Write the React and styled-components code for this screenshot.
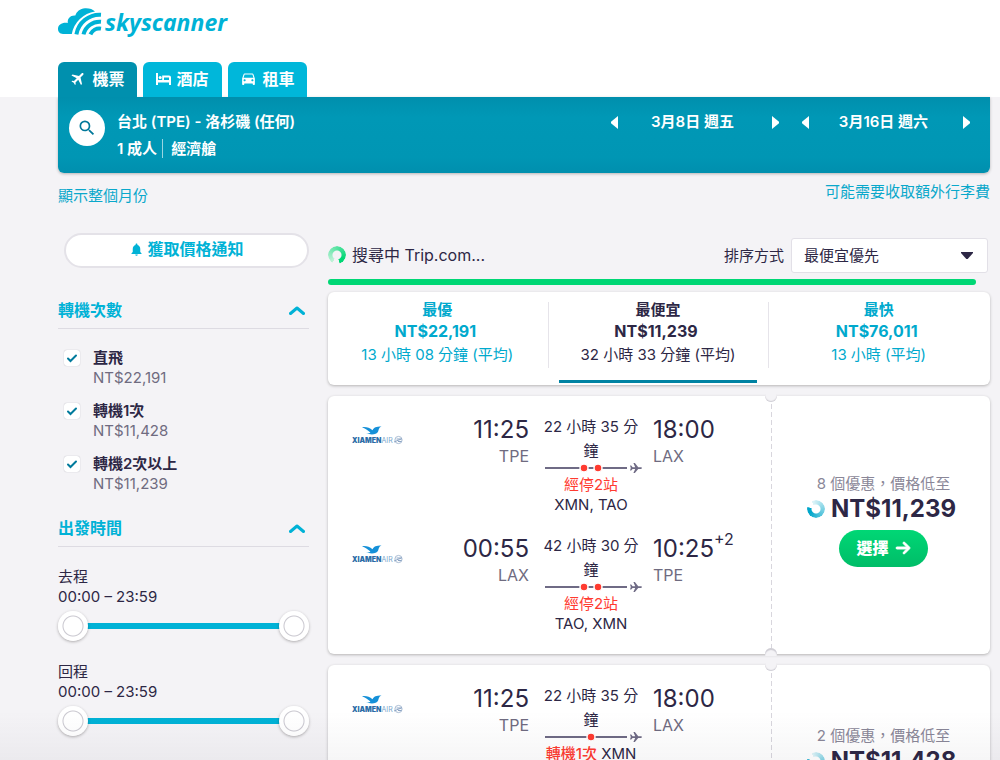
import { useState } from "react";
import styled, { createGlobalStyle } from "styled-components";
import { MdDirectionsCar, MdFlight, MdNotifications, MdSearch } from "react-icons/md";
import { FaArrowRight } from "react-icons/fa6";

const GlobalStyle = createGlobalStyle`
  * {
    box-sizing: border-box;
  }

  body {
    margin: 0;
    background: #f4f3f6;
    color: #2d2745;
    font-family: Inter, "Noto Sans CJK TC", sans-serif;
    font-size: 15px;
    line-height: 20px;
  }

  button,
  select {
    font: inherit;
    color: inherit;
    margin: 0;
    padding: 0;
    border: 0;
    background: none;
    cursor: pointer;
  }

  a {
    color: #0aa8cb;
    text-decoration: none;
  }

  svg {
    display: block;
    flex-shrink: 0;
  }
`;

const Page = styled.div`
  min-height: 100vh;
`;

const Header = styled.header`
  background: #fff;
  padding: 8px 10px 0 58px;
`;

const Logo = styled.a`
  display: flex;
  gap: 3px;
  height: 54px;
  color: #00b2d6;
`;

const LogoText = styled.span`
  font: italic 700 23px/28px "Noto Sans", sans-serif;
`;

const ProductTabs = styled.nav`
  display: flex;
  gap: 6px;
`;

const ProductTab = styled.a`
  display: flex;
  align-items: center;
  justify-content: center;
  gap: 5px;
  width: 79px;
  height: 35px;
  padding-bottom: 2px;
  border-radius: 6px 6px 0 0;
  background: ${(props) => (props.$active ? "#0090ae" : "#00b7da")};
  color: #fff;
  font-size: 16px;
  font-weight: 700;
`;

const SearchPanel = styled.section`
  display: flex;
  justify-content: space-between;
  height: 76px;
  margin: 0 10px 0 58px;
  padding: 11px 20px 0 11px;
  border-radius: 0 0 6px 6px;
  background: linear-gradient(#008fad, #0098b6 20px, #0096b4 60px, #008fae);
  box-shadow: 0 1px 3px rgba(37, 32, 31, 0.3);
  color: #fff;
  font-weight: 600;
`;

const SearchSummary = styled.div`
  display: flex;
  gap: 12px;
`;

const SearchButton = styled.button`
  display: flex;
  align-items: center;
  justify-content: center;
  width: 36px;
  height: 36px;
  margin-top: 2px;
  border-radius: 50%;
  background: #fff;
  color: #00789a;
`;

const Route = styled.div`
  line-height: 27px;
`;

const Cabin = styled.span`
  margin-left: 5px;
  padding-left: 8px;
  border-left: 1px solid rgba(255, 255, 255, 0.6);
`;

const Dates = styled.div`
  display: flex;
  gap: 23px;
`;

const DatePicker = styled.div`
  display: flex;
  align-items: center;
  justify-content: space-between;
  width: 168px;
  height: 28px;
`;

const DateLabel = styled.span`
  padding-right: 5px;
`;

const Links = styled.div`
  display: flex;
  align-items: flex-start;
  justify-content: space-between;
  padding: 9px 10px 0 58px;
`;

const MonthLink = styled.a`
  margin-top: 4px;
`;

const Content = styled.div`
  display: grid;
  grid-template-columns: 251px 1fr;
  gap: 19px;
  padding: 27px 10px 0 58px;
`;

const AlertButton = styled.button`
  display: flex;
  align-items: center;
  justify-content: center;
  gap: 3px;
  width: 245px;
  height: 35px;
  margin: 0 0 8px 6px;
  padding-bottom: 3px;
  border: 2px solid #e4e2e8;
  border-radius: 18px;
  background: #fff;
  color: #00b2d6;
  font-size: 16px;
  font-weight: 700;
`;

const FilterSection = styled.section`
  padding-top: 22px;
`;

const FilterHeader = styled.button`
  display: flex;
  align-items: center;
  justify-content: space-between;
  width: 100%;
  padding: 0 4px 6px 0;
  border-bottom: 1px solid #dddbe2;
  color: #00b2d6;
  font-size: 16px;
  font-weight: 700;
  line-height: 24px;
`;

const StopList = styled.div`
  display: grid;
  gap: 13px;
  padding: 19px 0 0 6px;
`;

const StopOption = styled.label`
  display: flex;
  gap: 13px;
`;

const Checkbox = styled.input`
  appearance: none;
  width: 16px;
  height: 16px;
  margin: 2px 0 0;
  border-radius: 3px;
  background: #fff;
  box-shadow: 0 0 1px rgba(45, 39, 69, 0.4);

  &:checked {
    background: #fff
      url("data:image/svg+xml,%3Csvg xmlns='http://www.w3.org/2000/svg' viewBox='0 0 16 16'%3E%3Cpath d='M4 8.5l2.5 2.5L12 5.5' fill='none' stroke='%23007a9c' stroke-width='2' stroke-linecap='round'/%3E%3C/svg%3E");
  }
`;

const Muted = styled.span`
  display: block;
  color: #6f6b80;
`;

const Strong = styled.span`
  display: block;
  font-weight: 600;
`;

const TimeFilter = styled.div`
  padding-top: 20px;

  & + & {
    padding-top: 21px;
  }
`;

const Slider = styled.div`
  position: relative;
  height: 30px;
  margin-top: 4px;
  background: linear-gradient(#00b2d6, #00b2d6) center / 220px 6px no-repeat;
`;

const Range = styled.input`
  position: absolute;
  inset: 0;
  appearance: none;
  width: 100%;
  height: 30px;
  margin: 0;
  background: none;
  pointer-events: none;

  &::-webkit-slider-thumb {
    appearance: none;
    width: 30px;
    height: 30px;
    border-radius: 50%;
    background: radial-gradient(circle, #fff 9px, #c9c7cf 10px, #fff 11px);
    box-shadow: 0 1px 3px rgba(37, 32, 31, 0.35);
    pointer-events: auto;
  }
`;

const Results = styled.main`
  padding-top: 5px;
`;

const Toolbar = styled.div`
  display: flex;
  align-items: center;
  justify-content: space-between;
  height: 35px;
  padding-right: 2px;
`;

const Status = styled.div`
  display: flex;
  align-items: center;
  gap: 6px;
  padding-bottom: 2px;
  font-size: 16px;
`;

const Spinner = styled.span`
  width: 18px;
  height: 18px;
  border-radius: 50%;
  background: conic-gradient(
    from ${(props) => props.$from},
    ${(props) => props.$tint},
    ${(props) => props.$color} 270deg 310deg,
    transparent 315deg
  );
  mask: radial-gradient(circle, transparent 4px, #000 5px);
`;

const Sort = styled.label`
  display: flex;
  align-items: center;
  gap: 7px;
`;

const SelectBox = styled.span`
  position: relative;

  svg {
    position: absolute;
    top: 14px;
    right: 15px;
    pointer-events: none;
  }
`;

const Select = styled.select`
  appearance: none;
  display: block;
  width: 197px;
  height: 35px;
  padding: 0 12px;
  border: 1px solid #e2e0e7;
  border-radius: 3px;
  background: #fff;
`;

const Progress = styled.div`
  height: 6px;
  margin: 6px 14px 0 0;
  border-radius: 3px;
  background: #00d775;
`;

const SortTabs = styled.div`
  display: grid;
  grid-template-columns: repeat(3, 1fr);
  height: 93px;
  margin-top: 7px;
  border-radius: 6px;
  background: #fff;
  box-shadow: 0 1px 3px rgba(37, 32, 31, 0.3);
`;

const SortTabCell = styled.div`
  display: flex;
  padding: 0 12px 2px 10px;
  background: linear-gradient(#e6e4ea, #e6e4ea) right 10px / 1px 66px no-repeat;

  &:last-child {
    background: none;
  }
`;

const SortTab = styled.button`
  display: flex;
  flex-direction: column;
  align-items: center;
  flex: 1;
  padding-top: 8px;
  border-bottom: 3px solid ${(props) => (props.$active ? "#0083a3" : "transparent")};
  color: ${(props) => (props.$active ? "#2d2745" : "#00a9cd")};
`;

const SortPrice = styled.span`
  padding-right: 4px;
  font-size: 16px;
  font-weight: 700;
  line-height: 22px;
`;

const Average = styled.span`
  margin-top: 3px;
`;

const Card = styled.article`
  position: relative;
  display: grid;
  grid-template-columns: 1fr 219px;
  min-height: 224px;
  margin-top: 11px;
  border-radius: 6px;
  background: #fff;
  box-shadow: 0 1px 3px rgba(37, 32, 31, 0.3);
`;

const Legs = styled.div`
  display: flex;
  flex-direction: column;
  gap: 19px;
  padding: 19px 0 20px 24px;
`;

const Leg = styled.div`
  display: grid;
  grid-template-columns: 52px 1fr 98px 118px;
  column-gap: 13px;
`;

const Carrier = styled.div`
  padding-top: 10px;
`;

const Endpoint = styled.div`
  text-align: ${(props) => props.$align};
`;

const Time = styled.div`
  font-size: 24px;
  line-height: 30px;
`;

const DayOffset = styled.sup`
  font-size: 16px;
  line-height: 0;
  vertical-align: 12px;
`;

const Airport = styled.div`
  color: #6f6b80;
  font-size: 16px;
  line-height: 22px;
`;

const Middle = styled.div`
  text-align: center;
`;

const Duration = styled.div`
  line-height: 24px;
`;

const StopCount = styled.span`
  color: #ff3b30;
  font-weight: ${(props) => (props.$bold ? 500 : 400)};
`;

const Ticket = styled.div`
  display: flex;
  flex-direction: column;
  align-items: center;
  justify-content: center;
  padding: 0 0 9px 6px;
  background: repeating-linear-gradient(#d8d6dd 0 5px, transparent 5px 8px) left / 1px 100%
    no-repeat;
`;

// half circle cut out of the card edge above and below the fold line
const Notch = styled.span`
  position: absolute;
  right: 213px;
  width: 12px;
  height: 8px;
  background: #f4f3f6;
  ${(props) =>
    props.$bottom
      ? "bottom: -2px; border-radius: 6px 6px 0 0; box-shadow: inset 0 2px 1px #cfcdd4;"
      : "top: -2px; border-radius: 0 0 6px 6px; box-shadow: inset 0 -1px 1px #cfcdd4;"}
`;

const PriceRow = styled.div`
  display: flex;
  align-items: center;
  gap: 6px;
  padding-right: 4px;
  font-size: 24px;
  font-weight: 700;
  line-height: 30px;
`;

const Deals = styled.div`
  color: #8a8798;
`;

const SelectButton = styled.button`
  display: flex;
  align-items: center;
  justify-content: center;
  gap: 6px;
  width: 89px;
  height: 37px;
  margin-top: 6px;
  padding-bottom: 2px;
  border-radius: 19px;
  background: linear-gradient(#00d775, #00bd68);
  color: #fff;
  font-size: 16px;
  font-weight: 900;
`;

const BottomShade = styled.div`
  position: fixed;
  right: 0;
  bottom: 0;
  left: 0;
  height: 50px;
  background: linear-gradient(transparent, rgba(37, 32, 51, 0.04));
  pointer-events: none;
`;

const CloudLogo = () => (
  <svg width="44" height="28" viewBox="0 0 44 28" fill="none" aria-hidden="true">
    <path
      d="M5 26H13.8A28 28 0 0 1 37 3.6C35 1 31 0 27 .2 22 .6 18.5 3.6 17.3 7.5 12.5 7 9.2 10.5 9.8 15 4 14.2 0 17 0 20.8 0 24 2 26 5 26Z"
      fill="currentColor"
    />
    <g stroke="currentColor" strokeWidth="4">
      <path d="M18.4 26.4A23.5 23.5 0 0 1 43 6.8" />
      <path d="M25.5 26.4A16.5 16.5 0 0 1 43 13.8" />
      <path d="M32.4 26.4A9.8 9.8 0 0 1 43 20.6" />
    </g>
  </svg>
);

const BedIcon = () => (
  <svg width="15" height="12" viewBox="0 0 15 12" fill="currentColor" aria-hidden="true">
    <path d="M0 0H2V7H6.2V2.6H13C14.2 2.6 15 3.4 15 4.6V12H13V9.4H2V12H0ZM8 4.6V7H13V4.6Z" fillRule="evenodd" />
    <circle cx="4.2" cy="4.6" r="1.5" />
  </svg>
);

const Triangle = ({ left }) => (
  <svg width="7" height="13" viewBox="0 0 7 13" fill="currentColor" aria-hidden="true">
    <path d={left ? "M7 0V13L0 7.2V5.8Z" : "M0 0V13L7 7.2V5.8Z"} />
  </svg>
);

const Chevron = () => (
  <svg width="16" height="9" viewBox="0 0 16 9" fill="none" aria-hidden="true">
    <path
      d="M1.5 7.5L8 2L14.5 7.5"
      stroke="currentColor"
      strokeWidth="3"
      strokeLinecap="round"
      strokeLinejoin="round"
    />
  </svg>
);

const XiamenAir = () => (
  <svg width="52" height="20" viewBox="0 0 52 20">
    <path
      d="M10 2.2C14.5 1.6 17.5 3 20.5 5.2 22 2.6 24 1.6 29.5 1.6 26.4 3 27 4.8 26 6.8 24.4 9.8 19.5 10 14 8.6 16.5 8.4 18 8 18.4 7.4 16 5.2 13 3.4 10 2.2Z"
      fill="#1590d8"
    />
    <text x="0" y="18" fontSize="7" fontWeight="900" fontFamily="Inter, sans-serif" fill="#2b6ca6">
      XIAMEN
      <tspan fontWeight="400" fill="#7aa6cc">
        AIR
      </tspan>
    </text>
    <circle cx="46.5" cy="15" r="3.6" fill="none" stroke="#a9bcd3" />
    <path d="M42 17L50 13.7M44.5 14H49M46 16.5H49.5" stroke="#8ba4c4" strokeWidth="1" />
  </svg>
);

const StopLine = ({ count }) => {
  const dots = count === 1 ? [49] : [42, 56];
  return (
    <svg width="102" height="12" viewBox="0 0 102 12" aria-hidden="true">
      <path d="M3 5H85" stroke="#6f6b85" strokeWidth="2" />
      {dots.map((x) => (
        <circle key={x} cx={x} cy="5" r="4" fill="#ff3b30" stroke="#fff" strokeWidth="1.5" />
      ))}
      <path
        d="M88 2.6H89.2L90.6 4.3H93.2L91.4 0H92.9L96.2 4.3H99C100.3 4.3 100.3 5.9 99 5.9H96.2L92.9 10H91.4L93.2 5.9H90.6L89.2 7.6H88L88.8 5.1Z"
        fill="#6f6b85"
      />
    </svg>
  );
};

const stopOptions = [
  { label: "直飛", price: "NT$22,191" },
  { label: "轉機1次", price: "NT$11,428" },
  { label: "轉機2次以上", price: "NT$11,239" },
];

const sortTabs = [
  { label: "最優", price: "NT$22,191", average: "13 小時 08 分鐘 (平均)" },
  { label: "最便宜", price: "NT$11,239", average: "32 小時 33 分鐘 (平均)" },
  { label: "最快", price: "NT$76,011", average: "13 小時 (平均)" },
];

const flights = [
  {
    deals: 8,
    price: "NT$11,239",
    legs: [
      { from: "TPE", to: "LAX", depart: "11:25", arrive: "18:00", duration: "22 小時 35 分鐘", stops: "經停2站", count: 2, via: "XMN, TAO" },
      { from: "LAX", to: "TPE", depart: "00:55", arrive: "10:25", offset: "+2", duration: "42 小時 30 分鐘", stops: "經停2站", count: 2, via: "TAO, XMN" },
    ],
  },
  {
    deals: 2,
    price: "NT$11,428",
    legs: [
      { from: "TPE", to: "LAX", depart: "11:25", arrive: "18:00", duration: "22 小時 35 分鐘", stops: "轉機1次", count: 1, via: "XMN" },
    ],
  },
];

const DateControl = ({ date }) => (
  <DatePicker>
    <button aria-label="前一天">
      <Triangle left />
    </button>
    <DateLabel>{date}</DateLabel>
    <button aria-label="後一天">
      <Triangle />
    </button>
  </DatePicker>
);

const TimeRange = ({ label }) => (
  <TimeFilter>
    <div>{label}</div>
    <div>00:00 – 23:59</div>
    <Slider>
      <Range type="range" min="0" max="1439" defaultValue="0" aria-label={label} />
      <Range type="range" min="0" max="1439" defaultValue="1439" aria-label={label} />
    </Slider>
  </TimeFilter>
);

const FlightLeg = ({ leg }) => (
  <Leg>
    <Carrier>
      <XiamenAir />
    </Carrier>
    <Endpoint $align="right">
      <Time>{leg.depart}</Time>
      <Airport>{leg.from}</Airport>
    </Endpoint>
    <Middle>
      <Duration>{leg.duration}</Duration>
      <StopLine count={leg.count} />
      <StopCount $bold={leg.count === 1}>{leg.stops}</StopCount> {leg.count > 1 && <br />}
      {leg.via}
    </Middle>
    <Endpoint $align="left">
      <Time>
        {leg.arrive}
        {leg.offset && <DayOffset>{leg.offset}</DayOffset>}
      </Time>
      <Airport>{leg.to}</Airport>
    </Endpoint>
  </Leg>
);

const FlightCard = ({ flight }) => (
  <Card>
    <Legs>
      {flight.legs.map((leg) => (
        <FlightLeg key={leg.from} leg={leg} />
      ))}
    </Legs>
    <Ticket>
      <Deals>{flight.deals} 個優惠，價格低至</Deals>
      <PriceRow>
        <Spinner $color="#00a6ca" $tint="#e2f5f9" $from="-30deg" />
        {flight.price}
      </PriceRow>
      <SelectButton>
        選擇 <FaArrowRight size={16} stroke="currentColor" strokeWidth={30} />
      </SelectButton>
    </Ticket>
    <Notch />
    <Notch $bottom />
  </Card>
);

const App = () => {
  const [activeSort, setActiveSort] = useState("最便宜");

  return (
    <Page lang="zh-TW">
      <GlobalStyle />
      <Header>
        <Logo href="#">
          <CloudLogo />
          <LogoText>skyscanner</LogoText>
        </Logo>
        <ProductTabs>
          <ProductTab href="#" $active>
            <MdFlight size={17} transform="rotate(45)" /> 機票
          </ProductTab>
          <ProductTab href="#">
            <BedIcon /> 酒店
          </ProductTab>
          <ProductTab href="#">
            <MdDirectionsCar size={17} /> 租車
          </ProductTab>
        </ProductTabs>
      </Header>

      <SearchPanel>
        <SearchSummary>
          <SearchButton aria-label="搜尋">
            <MdSearch size={20} />
          </SearchButton>
          <Route>
            <div>台北 (TPE) - 洛杉磯 (任何)</div>
            <div>
              1 成人
              <Cabin>經濟艙</Cabin>
            </div>
          </Route>
        </SearchSummary>
        <Dates>
          <DateControl date="3月8日 週五" />
          <DateControl date="3月16日 週六" />
        </Dates>
      </SearchPanel>

      <Links>
        <MonthLink href="#">顯示整個月份</MonthLink>
        <a href="#">可能需要收取額外行李費</a>
      </Links>

      <Content>
        <aside>
          <AlertButton>
            <MdNotifications size={15} /> 獲取價格通知
          </AlertButton>
          <FilterSection>
            <FilterHeader>
              轉機次數 <Chevron />
            </FilterHeader>
            <StopList>
              {stopOptions.map((option) => (
                <StopOption key={option.label}>
                  <Checkbox type="checkbox" defaultChecked />
                  <span>
                    <Strong>{option.label}</Strong>
                    <Muted>{option.price}</Muted>
                  </span>
                </StopOption>
              ))}
            </StopList>
          </FilterSection>
          <FilterSection>
            <FilterHeader>
              出發時間 <Chevron />
            </FilterHeader>
            <TimeRange label="去程" />
            <TimeRange label="回程" />
          </FilterSection>
        </aside>

        <Results>
          <Toolbar>
            <Status>
              <Spinner $color="#00d775" $tint="#c4f2da" $from="-150deg" />
              搜尋中 Trip.com...
            </Status>
            <Sort>
              排序方式
              <SelectBox>
                <Select>
                  <option>最便宜優先</option>
                </Select>
                <svg width="12" height="7" viewBox="0 0 12 7" aria-hidden="true">
                  <path d="M0 0H12V1L6.7 7H5.3L0 1Z" fill="#2d2745" />
                </svg>
              </SelectBox>
            </Sort>
          </Toolbar>
          <Progress />
          <SortTabs>
            {sortTabs.map((tab) => (
              <SortTabCell key={tab.label}>
                <SortTab
                  $active={tab.label === activeSort}
                  onClick={() => setActiveSort(tab.label)}
                >
                  <Strong>{tab.label}</Strong>
                  <SortPrice>{tab.price}</SortPrice>
                  <Average>{tab.average}</Average>
                </SortTab>
              </SortTabCell>
            ))}
          </SortTabs>
          {flights.map((flight) => (
            <FlightCard key={flight.price} flight={flight} />
          ))}
        </Results>
      </Content>
      <BottomShade />
    </Page>
  );
};

export default App;
